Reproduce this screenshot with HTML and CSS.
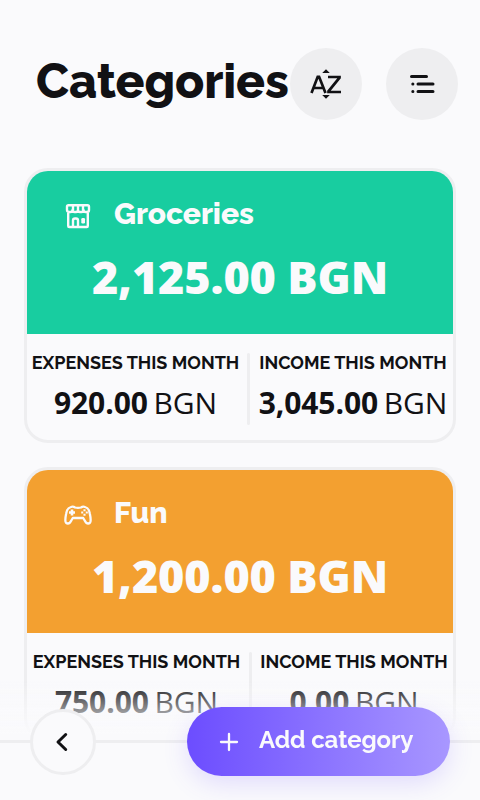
FILE: index.html
```html
<!DOCTYPE html>
<html lang="en">
<head>
<meta charset="utf-8">
<title>Categories</title>
<link rel="stylesheet" href="styles.css">
</head>
<body>
<header class="header">
  <h1 class="title">Categories</h1>
  <button class="round" aria-label="Sort">
    <svg width="36" height="36" viewBox="0 0 36 36" fill="none" stroke="#111114" stroke-width="2.700"><path d="M3.500 27 9.700 10.800h1.400L17.500 27M5.600 22h9.800M20 11h11.500v.7L20.500 25.300V26H33"/><path d="M18 3.300 21.800 7h-7.600zM18 32.700 21.800 29h-7.600z" fill="#111114" stroke="none"/></svg>
  </button>
  <button class="round" aria-label="Reorder">
    <svg width="36" height="36" viewBox="0 0 36 36" fill="none" stroke="#111114" stroke-width="3" stroke-linecap="round"><path d="M7.500 10.500h15M14 18h15M14 25.500h15M8.800 18h.1M8.800 25.500h.1"/></svg>
  </button>
</header>
<main class="list">
  <section class="card">
    <div class="top green">
      <div class="name">
        <svg width="28" height="28" viewBox="0 0 28 28" fill="none" stroke="#fafafc" stroke-width="2.400" stroke-linejoin="round"><path d="M4.200 9.500V24a1 1 0 0 0 1 1h17.600a1 1 0 0 0 1-1V9.500M4.500 3.200h19q1.500 0 1.500 1.500V8q0 2-2 2h-1.500q-2 0-2-2q0 2-2 2h-1.500q-2 0-2-2q0 2-2 2h-1.500q-2 0-2-2q0 2-2 2H5q-2 0-2-2V4.700q0-1.500 1.500-1.500zM9 3.200v5M14 3.200v5M19 3.200v5M9 25V18.500q0-2 2-2h1q2 0 2 2V25"/><path d="M18.500 17.200h1.300v3h-1.300z"/></svg>
        <h2 class="label">Groceries</h2>
      </div>
      <div class="amount">2,125.00 BGN</div>
    </div>
    <div class="stats">
      <div class="stat out"><h3 class="caption">EXPENSES THIS MONTH</h3><p class="value"><b>920.00</b> BGN</p></div>
      <div class="divider"></div>
      <div class="stat in"><h3 class="caption">INCOME THIS MONTH</h3><p class="value"><b>3,045.00</b> BGN</p></div>
    </div>
  </section>
  <section class="card fun">
    <div class="top orange">
      <div class="name">
        <svg width="28" height="28" viewBox="0 0 28 28" fill="none" stroke="#fafafc" stroke-width="2.300" stroke-linejoin="round"><path d="M7 6q2-1 4 .5q3 .8 6 0q2-1.500 4-.5q4 1 4.800 6.500q1.200 5.500.7 8q-.5 2-2.300 2q-2.200 0-3.800-3.500l-1.200-2h-10.400l-1.200 2Q6 22.500 3.800 22.500q-1.800 0-2.300-2q-.5-2.500.7-8Q3 7 7 6z"/><path d="M8 8.500v6M5 11.500h6" stroke-width="2.600"/><path d="M20.500 8.200v2M20.500 12.800v2M17.200 11.500h2M21.800 11.500h2" stroke-width="2.100"/></svg>
        <h2 class="label">Fun</h2>
      </div>
      <div class="amount">1,200.00 BGN</div>
    </div>
    <div class="stats">
      <div class="stat out"><h3 class="caption">EXPENSES THIS MONTH</h3><p class="value"><b>750.00</b> BGN</p></div>
      <div class="divider"></div>
      <div class="stat in"><h3 class="caption">INCOME THIS MONTH</h3><p class="value"><b>0.00</b> BGN</p></div>
    </div>
  </section>
</main>
<footer class="bar">
  <div class="line"></div>
  <button class="back" aria-label="Back">
    <svg width="24" height="24" viewBox="0 0 24 24" fill="none" stroke="#111114" stroke-width="3" stroke-linecap="round" stroke-linejoin="round"><path d="M14.700 4.500 7 12l7.700 7.500"/></svg>
  </button>
  <button class="add">
    <svg width="24" height="24" viewBox="0 0 24 24" fill="none" stroke="#fafafc" stroke-width="2.300" stroke-linecap="round"><path d="M12 4v16M4 12h16"/></svg>
    <span class="add-text">Add category</span>
  </button>
</footer>
</body>
</html>
```
FILE: styles.css
```css
* { box-sizing: border-box; margin: 0; padding: 0; }
body {
  height: 800px;
  overflow: hidden;
  background: #fafafc;
  color: #111114;
  font-family: Raleway, Lato, sans-serif;
  font-feature-settings: "lnum";
}
button { border: 0; font: inherit; display: flex; align-items: center; }
svg { display: block; flex: none; }
.header { display: flex; align-items: center; height: 120px; padding: 48px 22px 0 36px; }
.title { width: 254px; font-size: 48px; font-weight: 800; line-height: 56px; letter-spacing: -.12px; margin-top: -7px; white-space: nowrap; }
.round { width: 72px; height: 72px; flex: none; justify-content: center; border-radius: 50%; background: #eeeef0; color: #111114; }
.round + .round { margin-left: 24px; }
.list { display: flex; flex-direction: column; gap: 24px; padding: 48px 24px 0; }
.card { height: 275px; flex: none; border: 3px solid #eeeef0; border-radius: 24px; overflow: hidden; }
.top { height: 163px; padding-top: 26px; color: #fafafc; }
.green { background: #18cda0; }
.orange { background: #f3a030; }
.name { display: flex; align-items: center; gap: 22px; height: 36px; padding-left: 37px; }
.name svg { margin-top: 2px; }
.label { font-size: 30px; font-weight: 800; line-height: 36px; margin-top: -2px; letter-spacing: -.06px; }
.amount { margin-top: 14px; text-align: center; font: 800 45px/60px "Open Sans", sans-serif; letter-spacing: -.15px; white-space: nowrap; }
.stats { display: flex; padding-top: 19px; }
.stat { display: flex; flex-direction: column; align-items: center; white-space: nowrap; }
.out { width: 220px; padding-right: 3px; }
.in { flex: 1; padding-left: 3px; }
.fun .out { width: 222px; padding-right: 3px; }
.divider { width: 3px; height: 72px; border-radius: 2px; background: #eeeef0; }
.caption { font-size: 18px; font-weight: 700; line-height: 20px; }
.value { margin-top: 9px; font: 400 30px/42px "Open Sans", sans-serif; word-spacing: -2px; letter-spacing: -.08px; }
.value b { font-weight: 700; }
.bar { position: fixed; left: 0; right: 0; bottom: 0; height: 120px; padding: 27px 30px 0; display: flex; align-items: flex-start; justify-content: space-between; background: linear-gradient(rgba(250, 250, 252, 0), #fafafc 55px); }
.line { position: absolute; left: 0; right: 0; top: 60px; height: 3px; background: #eeeef0; }
.back { position: relative; width: 66px; height: 66px; margin-top: 2px; justify-content: center; border: 3px solid #eeeef0; border-radius: 50%; background: #fafafc; }
.add { position: relative; width: 263px; height: 69px; padding-left: 30px; gap: 18px; border-radius: 35px; background: linear-gradient(90deg, #6c4dff, #a897ff); color: #fafafc; box-shadow: 0 8px 24px rgba(108, 77, 255, .17); }
.add-text { font-size: 24px; font-weight: 700; line-height: 28px; margin-top: -4px; letter-spacing: -.08px; white-space: nowrap; }
```
